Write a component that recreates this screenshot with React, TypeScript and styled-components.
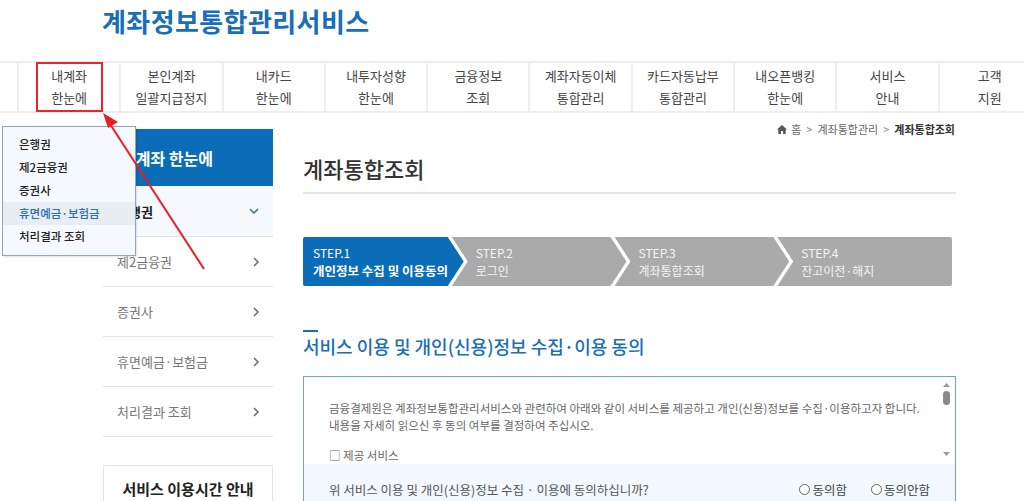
import React from 'react';
import styled, { createGlobalStyle } from 'styled-components';

const GlobalStyle = createGlobalStyle`
  * { box-sizing: border-box; }
  body {
    margin: 0;
    background: #ffffff;
    font-family: 'Noto Sans CJK KR', 'Noto Sans', sans-serif;
    color: #333;
  }
`;

const Page = styled.div`
  position: relative;
  width: 1024px;
  height: 501px;
  overflow: hidden;
`;

const Header = styled.header`
  height: 61px;
  padding: 5px 0 0 102px;
`;

const Logo = styled.h1`
  margin: 0;
  font-size: 26px;
  line-height: 32px;
  font-weight: 700;
  color: #1a6db7;
  letter-spacing: 0.4px;
`;

const Nav = styled.nav`
  display: flex;
  height: 52px;
  padding-left: 17px;
  border-top: 2px solid #eeeeee;
  border-bottom: 2px solid #eeeeee;
  overflow: hidden;
`;

const NavItem = styled.div`
  position: relative;
  flex: 0 0 102.3px;
  display: flex;
  align-items: center;
  justify-content: center;
  text-align: center;
  border-left: 2px solid #eeeeee;
  font-size: 13px;
  line-height: 22px;
  color: #444;
`;

const NavCaret = styled.span`
  position: absolute;
  left: 50%;
  bottom: -11px;
  transform: translateX(-50%);
  color: #2b74c0;
  display: flex;
`;

const Body = styled.div`
  display: flex;
  gap: 30px;
  padding-left: 103px;
`;

const Sidebar = styled.aside`
  width: 170px;
  flex: 0 0 170px;
  margin-top: 16px;
`;

const SideHead = styled.div`
  height: 57px;
  display: flex;
  align-items: center;
  padding-left: 18px;
  background: #0b6cb7;
  color: #fff;
  font-size: 16px;
  font-weight: 700;
`;

const SideItem = styled.div<{ $active?: boolean }>`
  height: ${p => (p.$active ? 51 : 50)}px;
  display: flex;
  align-items: center;
  justify-content: space-between;
  padding: 0 14px;
  background: ${p => (p.$active ? '#f6f9fd' : '#fff')};
  border-bottom: 1px solid #dfe4ea;
  font-size: 13px;
  font-weight: ${p => (p.$active ? 700 : 400)};
  color: ${p => (p.$active ? '#222' : '#777')};
`;

const SideIcon = styled.span<{ $active?: boolean }>`
  display: flex;
  color: ${p => (p.$active ? '#2b6fb3' : '#666')};
`;

const InfoBox = styled.div`
  margin-top: 28px;
  height: 60px;
  border: 1px solid #dde6f0;
  padding-top: 12px;
  text-align: center;
  font-size: 15px;
  font-weight: 700;
  color: #222;
`;

const Main = styled.main`
  width: 653px;
`;

const Crumbs = styled.div`
  display: flex;
  justify-content: flex-end;
  align-items: center;
  gap: 4px;
  padding: 6px 1px 0 0;
  height: 26px;
  font-size: 11px;
  color: #666;
`;

const CrumbSep = styled.span`
  color: #888;
  margin: 0 1px;
`;

const CrumbCurrent = styled.strong`
  color: #333;
  font-weight: 700;
`;

const PageTitle = styled.h2`
  margin: 14px 0 0;
  padding-bottom: 9px;
  border-bottom: 2px solid #e6e6e6;
  font-size: 22px;
  line-height: 30px;
  font-weight: 500;
  color: #333;
`;

const Steps = styled.ol`
  display: flex;
  width: 649px;
  height: 49px;
  margin: 43px 0 0;
  padding: 0;
  list-style: none;
`;

const Step = styled.li<{ $active?: boolean; $first?: boolean; $last?: boolean }>`
  flex: 1;
  margin-left: ${p => (p.$first ? 0 : -12)}px;
  padding-left: ${p => (p.$first ? 10 : 24)}px;
  display: flex;
  flex-direction: column;
  justify-content: center;
  background: ${p => (p.$active ? '#0b6cb7' : '#aaaaaa')};
  color: ${p => (p.$active ? '#fff' : '#f4f4f4')};
  font-size: 12px;
  line-height: 17.5px;
  border-radius: ${p => (p.$first ? '2px 0 0 2px' : p.$last ? '0 2px 2px 0' : '0')};
  clip-path: ${p =>
    p.$last
      ? 'polygon(0 0, 100% 0, 100% 100%, 0 100%, 16px 50%)'
      : p.$first
      ? 'polygon(0 0, calc(100% - 16px) 0, 100% 50%, calc(100% - 16px) 100%, 0 100%)'
      : 'polygon(0 0, calc(100% - 16px) 0, 100% 50%, calc(100% - 16px) 100%, 0 100%, 16px 50%)'};
`;

const StepLine = styled.span<{ $bold?: boolean }>`
  display: block;
  white-space: nowrap;
  font-size: ${p => (p.$bold ? 12.5 : 12)}px;
  font-weight: ${p => (p.$bold ? 700 : 400)};
`;

const SectionTitle = styled.h3`
  margin: 44px 0 0;
  padding-top: 3px;
  position: relative;
  font-size: 18px;
  line-height: 26px;
  font-weight: 500;
  color: #1a6db7;

  &::before {
    content: '';
    position: absolute;
    top: 0;
    left: 0;
    width: 15px;
    height: 2px;
    background: #1a6db7;
  }
`;

const Agreement = styled.div`
  margin-top: 17px;
  border: 1px solid #6aa5da;
`;

const ScrollArea = styled.div`
  display: flex;
  height: 87px;
  overflow: hidden;
`;

const Terms = styled.div`
  flex: 1;
  padding: 23px 0 0 25px;
  font-size: 11.5px;
  line-height: 17px;
  color: #666;
`;

const TermsPara = styled.p`
  margin: 0 0 13px;
`;

const ScrollBar = styled.div`
  width: 17px;
  display: flex;
  flex-direction: column;
  align-items: center;
  padding: 6px 0 8px;
`;

const ScrollThumb = styled.div`
  width: 7px;
  height: 14px;
  margin-top: 4px;
  border-radius: 4px;
  background: #8a8a8a;
`;

const ScrollTrack = styled.div`
  flex: 1;
`;

const Question = styled.div`
  display: flex;
  align-items: center;
  height: 50px;
  padding: 0 25px;
  background: #f2f8fd;
  font-size: 12.5px;
  color: #555;
`;

const QuestionText = styled.span`
  flex: 1;
`;

const Radio = styled.label`
  display: flex;
  align-items: center;
  gap: 2px;
  margin-left: 24px;
  font-size: 12.5px;
  color: #444;
`;

const RadioDot = styled.span`
  width: 11px;
  height: 11px;
  border: 1px solid #666;
  border-radius: 50%;
  background: #fff;
`;

const Dropdown = styled.ul`
  position: absolute;
  left: 2px;
  top: 126px;
  width: 134px;
  height: 130px;
  margin: 0;
  padding: 6px 0 0;
  list-style: none;
  background: #f5f9fd;
  border: 1px solid #8ea5bd;
  box-shadow: 1px 1px 2px rgba(0, 0, 0, 0.12);
`;

const DropItem = styled.li<{ $hover?: boolean }>`
  height: 23px;
  line-height: 23px;
  padding-left: 16px;
  font-size: 11.5px;
  font-weight: 500;
  color: ${p => (p.$hover ? '#2a6fb3' : '#222')};
  background: ${p => (p.$hover ? '#e8edf2' : 'transparent')};
`;

const Highlight = styled.div`
  position: absolute;
  left: 36px;
  top: 62px;
  width: 67px;
  height: 50px;
  border: 2px solid #e8262b;
`;

const Annotation = styled.svg`
  position: absolute;
  left: 0;
  top: 0;
  pointer-events: none;
`;

const navItems = [
  ['내계좌', '한눈에'],
  ['본인계좌', '일괄지급정지'],
  ['내카드', '한눈에'],
  ['내투자성향', '한눈에'],
  ['금융정보', '조회'],
  ['계좌자동이체', '통합관리'],
  ['카드자동납부', '통합관리'],
  ['내오픈뱅킹', '한눈에'],
  ['서비스', '안내'],
  ['고객', '지원'],
];

const sideItems = ['은행권', '제2금융권', '증권사', '휴면예금·보험금', '처리결과 조회'];

const steps = [
  ['STEP.1', '개인정보 수집 및 이용동의'],
  ['STEP.2', '로그인'],
  ['STEP.3', '계좌통합조회'],
  ['STEP.4', '잔고이전·해지'],
];

const ChevronDown = ({ size = 10 }: { size?: number }) => (
  <svg width={size} height={size * 0.6} viewBox="0 0 10 6" fill="none">
    <path d="M1 1l4 4 4-4" stroke="currentColor" strokeWidth="1.5" />
  </svg>
);

const ChevronRight = () => (
  <svg width="6" height="10" viewBox="0 0 6 10" fill="none">
    <path d="M1 1l4 4-4 4" stroke="currentColor" strokeWidth="1.5" />
  </svg>
);

const HomeIcon = () => (
  <svg width="10" height="9" viewBox="0 0 10 9" fill="#555">
    <path d="M5 0L0 4.5h1.3V9h2.6V6h2.2v3h2.6V4.5H10z" />
  </svg>
);

const Tri = ({ up }: { up?: boolean }) => (
  <svg width="7" height="4" viewBox="0 0 7 4" fill="#999">
    <path d={up ? 'M0 4h7L3.5 0z' : 'M0 0h7L3.5 4z'} />
  </svg>
);

const App: React.FC = () => {
  return (
    <Page>
      <GlobalStyle />
      <Header>
        <Logo>계좌정보통합관리서비스</Logo>
      </Header>
      <Nav>
        {navItems.map(([a, b], i) => (
          <NavItem key={i}>
            <div>
              {a}
              <br />
              {b}
            </div>
            {i === 0 && (
              <NavCaret>
                <ChevronDown size={9} />
              </NavCaret>
            )}
          </NavItem>
        ))}
      </Nav>
      <Body>
        <Sidebar>
          <SideHead>내계좌 한눈에</SideHead>
          {sideItems.map((s, i) => (
            <SideItem key={s} $active={i === 0}>
              <span>{s}</span>
              <SideIcon $active={i === 0}>{i === 0 ? <ChevronDown size={10} /> : <ChevronRight />}</SideIcon>
            </SideItem>
          ))}
          <InfoBox>서비스 이용시간 안내</InfoBox>
        </Sidebar>
        <Main>
          <Crumbs>
            <HomeIcon />
            <span>홈</span>
            <CrumbSep>&gt;</CrumbSep>
            <span>계좌통합관리</span>
            <CrumbSep>&gt;</CrumbSep>
            <CrumbCurrent>계좌통합조회</CrumbCurrent>
          </Crumbs>
          <PageTitle>계좌통합조회</PageTitle>
          <Steps>
            {steps.map(([a, b], i) => (
              <Step key={a} $active={i === 0} $first={i === 0} $last={i === steps.length - 1}>
                <StepLine>{a}</StepLine>
                <StepLine $bold={i === 0}>{b}</StepLine>
              </Step>
            ))}
          </Steps>
          <SectionTitle>서비스 이용 및 개인(신용)정보 수집·이용 동의</SectionTitle>
          <Agreement>
            <ScrollArea>
              <Terms>
                <TermsPara>
                  금융결제원은 계좌정보통합관리서비스와 관련하여 아래와 같이 서비스를 제공하고 개인(신용)정보를 수집·이용하고자 합니다.
                  <br />
                  내용을 자세히 읽으신 후 동의 여부를 결정하여 주십시오.
                </TermsPara>
                <TermsPara>□ 제공 서비스</TermsPara>
              </Terms>
              <ScrollBar>
                <Tri up />
                <ScrollThumb />
                <ScrollTrack />
                <Tri />
              </ScrollBar>
            </ScrollArea>
            <Question>
              <QuestionText>위 서비스 이용 및 개인(신용)정보 수집 · 이용에 동의하십니까?</QuestionText>
              <Radio>
                <RadioDot />
                동의함
              </Radio>
              <Radio>
                <RadioDot />
                동의안함
              </Radio>
            </Question>
          </Agreement>
        </Main>
      </Body>

      <Dropdown>
        {sideItems.map((s, i) => (
          <DropItem key={s} $hover={i === 3}>
            {s}
          </DropItem>
        ))}
      </Dropdown>

      <Highlight />
      <Annotation width="1024" height="501" viewBox="0 0 1024 501">
        <line x1="204" y1="269" x2="110" y2="124" stroke="#ec1c24" strokeWidth="2" />
        <polygon points="103,113 118,122 108,128" fill="#ec1c24" />
      </Annotation>
    </Page>
  );
};

export default App;
